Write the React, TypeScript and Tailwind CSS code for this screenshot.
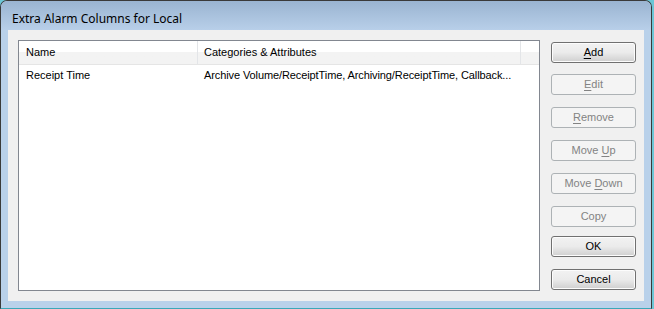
import React from "react";

const titleFont = { fontFamily: '"Noto Sans", "Open Sans", sans-serif' };
const bodyFont = { fontFamily: '"Liberation Sans", Arial, sans-serif' };

function Btn({ label, u, disabled }: { label: string; u?: number; disabled?: boolean }) {
  const content =
    u === undefined ? (
      <span>{label}</span>
    ) : (
      <span className="whitespace-pre">
        {label.slice(0, u)}
        <span className="underline underline-offset-2">{label[u]}</span>
        {label.slice(u + 1)}
      </span>
    );
  return disabled ? (
    <div className="h-[21px] w-[85px] rounded-[3px] border border-[#adb2b5] bg-[#f4f4f4] flex items-center justify-center text-[11px] text-[#838383] leading-none">
      {content}
    </div>
  ) : (
    <div className="h-[21px] w-[85px] rounded-[3px] border border-[#707070] bg-gradient-to-b from-[#f2f2f2] via-[#ebebeb] to-[#cfcfcf] shadow-[inset_0_0_0_1px_#fcfcfc] flex items-center justify-center text-[11px] text-black leading-none">
      {content}
    </div>
  );
}

export default function App() {
  return (
    <div className="w-[654px] h-[309px] bg-[#6cc6d6] overflow-hidden" style={bodyFont}>
      <div className="w-[652px] h-[309px] border border-[#3a3a3a] border-b-[#3aa8b8] rounded-t-[7px] bg-[#b9d1ea] flex flex-col overflow-hidden">
        <div
          className="h-[29px] bg-gradient-to-b from-[#9ab4d1] to-[#b8cfe9] flex items-center pl-[11px] pt-[6px] text-[12px] text-black"
          style={titleFont}
        >
          Extra Alarm Columns for Local
        </div>
        <div className="mx-[7px] h-[271px] bg-[#f0f0f0] flex pt-[10px] pl-[10px]">
          <div className="w-[522px] h-[251px] shrink-0 border border-[#828790] bg-white flex flex-col text-[11px] text-black">
            <div className="h-[24px] flex border-b border-[#e5e5e5] bg-gradient-to-b from-white from-50% to-[#f3f3f3] to-50%">
              <div className="w-[179px] shrink-0 border-r border-[#e3e5e8] flex items-center pl-[7px]">Name</div>
              <div className="w-[323px] shrink-0 border-r border-[#e3e5e8] flex items-center pl-[6px]">Categories &amp; Attributes</div>
              <div className="flex-1" />
            </div>
            <div className="h-[21px] flex items-center">
              <div className="w-[179px] shrink-0 pl-[7px]">Receipt Time</div>
              <div className="pl-[6px] whitespace-nowrap tracking-[-0.1px]">Archive Volume/ReceiptTime, Archiving/ReceiptTime, Callback...</div>
            </div>
          </div>
          <div className="ml-[11px] pt-[2px] flex flex-col">
            <Btn label="Add" u={0} />
            <div className="h-[11px]" />
            <Btn label="Edit" u={0} disabled />
            <div className="h-[12px]" />
            <Btn label="Remove" u={0} disabled />
            <div className="h-[12px]" />
            <Btn label="Move Up" u={5} disabled />
            <div className="h-[12px]" />
            <Btn label="Move Down" u={5} disabled />
            <div className="h-[12px]" />
            <Btn label="Copy" disabled />
            <div className="h-[9px]" />
            <Btn label="OK" />
            <div className="h-[12px]" />
            <Btn label="Cancel" />
          </div>
        </div>
      </div>
    </div>
  );
}
